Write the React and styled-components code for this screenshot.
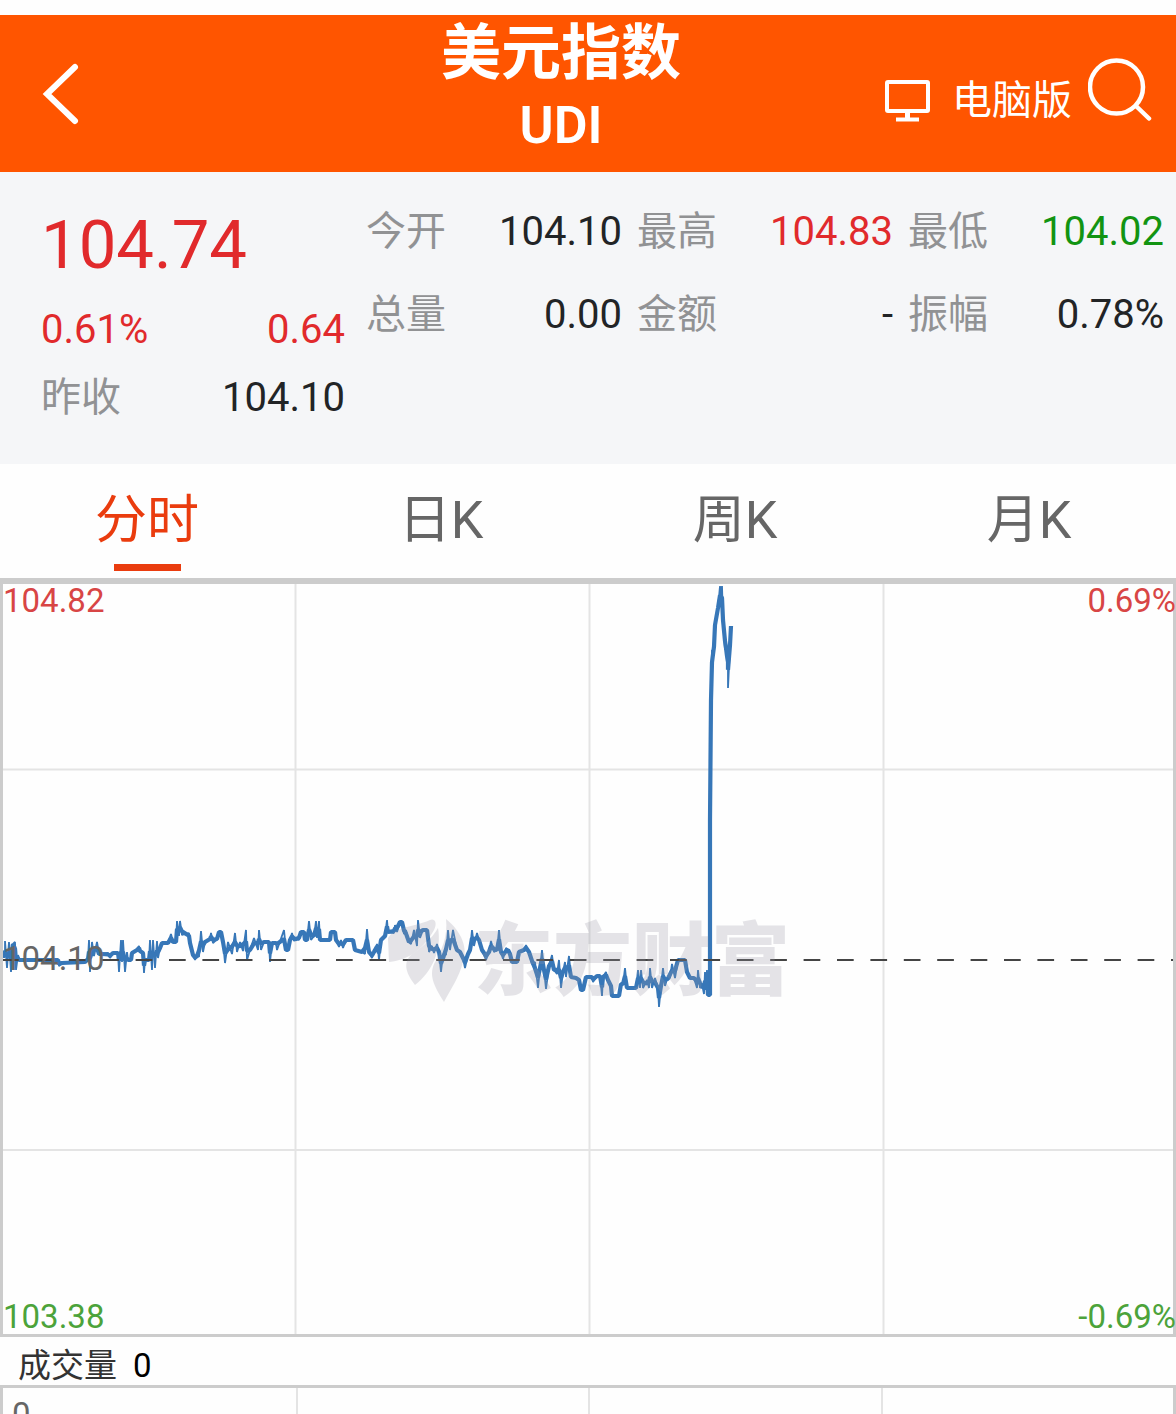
import React, { useState } from "react";
import styled, { createGlobalStyle } from "styled-components";

const GlobalStyle = createGlobalStyle`
  * { box-sizing: border-box; }
  body {
    margin: 0;
    background: #fefefe;
    font-family: Roboto, "Noto Sans CJK SC", sans-serif;
  }
  button {
    margin: 0;
    padding: 0;
    border: 0;
    background: none;
    color: inherit;
    font: inherit;
    cursor: pointer;
  }
  svg { display: block; }
`;

const colors = {
  brand: "#ff5500",
  active: "#ea3c0e",
  up: "#e12a2c",
  down: "#129412",
  plain: "#222426",
  muted: "#919294",
  frame: "#cccccc",
  grid: "#e4e4e4",
  line: "#3777b8",
};

const Page = styled.main`
  display: flex;
  flex-direction: column;
  height: 100vh;
  padding-top: 15px;
  overflow: hidden;
`;

const Header = styled.header`
  display: grid;
  grid-template-columns: 260px 1fr 314px;
  flex: none;
  height: 157px;
  background: ${colors.brand};
  color: #fff;
`;

const BackButton = styled.button`
  display: flex;
  align-items: center;
  justify-self: start;
  padding: 0 40px;
`;

const Heading = styled.div`
  padding-top: 2px;
  text-align: center;
`;

const Title = styled.h1`
  margin: 0;
  font-size: 60px;
  font-weight: 700;
  line-height: 74px;
  white-space: nowrap;
`;

const Code = styled.p`
  margin: 0;
  font-size: 52px;
  font-weight: 600;
  line-height: 70px;
`;

const Tools = styled.div`
  display: flex;
  align-items: center;
  justify-content: flex-end;
  gap: 16px;
  padding-right: 24px;
`;

const DesktopLink = styled.a`
  display: flex;
  align-items: center;
  gap: 22px;
  padding-top: 14px;
  color: inherit;
  font-size: 40px;
  line-height: 48px;
  text-decoration: none;
  white-space: nowrap;
`;

const SearchButton = styled.button`
  padding-bottom: 8px;
`;

const Quote = styled.section`
  display: grid;
  grid-template-columns: 304px 1fr;
  gap: 21px;
  flex: none;
  height: 292px;
  padding: 0 12px 0 41px;
  background: #f5f6f8;
  font-size: 40px;
`;

const Summary = styled.div`
  padding-top: 22px;
`;

const Price = styled.div`
  color: ${colors.up};
  font-size: 67px;
  line-height: 102px;
`;

const SummaryRow = styled.div`
  display: flex;
  justify-content: space-between;
  line-height: 68px;
`;

const Stats = styled.dl`
  display: grid;
  grid-template-columns: repeat(3, 1fr);
  align-content: start;
  column-gap: 15px;
  margin: 0;
  padding-top: 18px;
`;

const Stat = styled.div`
  display: flex;
  justify-content: space-between;
  line-height: 83px;
  white-space: nowrap;
`;

const Label = styled.dt`
  color: ${colors.muted};
`;

const Value = styled.dd`
  margin: 0;
  color: ${({ $tone }) => colors[$tone || "plain"]};
`;

const Tabs = styled.nav`
  display: grid;
  grid-template-columns: repeat(4, 1fr);
  flex: none;
  height: 114px;
`;

const Tab = styled.button`
  display: flex;
  flex-direction: column;
  align-items: center;
  padding-top: 14px;
  color: ${({ $active }) => ($active ? colors.active : "#666")};
  font-size: 52px;
  line-height: 86px;

  &::after {
    content: "";
    width: 67px;
    height: 7px;
    background: ${({ $active }) => ($active ? colors.active : "transparent")};
  }
`;

const ChartPanel = styled.section`
  position: relative;
  flex: none;
  border: 3px solid ${colors.frame};
  border-top-width: 6px;

  > svg {
    width: 100%;
    height: auto;
  }
`;

const AxisLabel = styled.span`
  position: absolute;
  ${({ $right }) => ($right ? "right: -3px;" : "left: 0;")}
  ${({ $at }) =>
    ({
      top: "top: 0;",
      middle: "top: 50%; transform: translateY(-50%);",
      bottom: "bottom: 0;",
    })[$at]}
  color: ${({ $color }) => $color};
  font-size: 33px;
  line-height: 34px;
`;

const VolumeTitle = styled.h2`
  display: flex;
  gap: 16px;
  flex: none;
  height: 48px;
  margin: 0;
  padding-left: 18px;
  color: #333;
  font-size: 33px;
  font-weight: 400;
  line-height: 58px;
`;

const VolumeValue = styled.span`
  color: #000;
`;

const VolumePanel = styled.section`
  display: grid;
  grid-template-columns: repeat(4, 1fr);
  flex: 1;
  min-height: 0;
  border: 3px solid ${colors.frame};
  border-bottom: 0;
`;

const VolumeCell = styled.div`
  padding: 10px 9px;
  border-left: 2px solid ${colors.grid};
  color: #666;
  font-size: 33px;
  line-height: 34px;

  &:first-child {
    border-left: 0;
  }
`;

const STATS = [
  ["今开", "104.10"],
  ["最高", "104.83", "up"],
  ["最低", "104.02", "down"],
  ["总量", "0.00"],
  ["金额", "-"],
  ["振幅", "0.78%"],
];

const TABS = ["分时", "日K", "周K", "月K"];

// Pairs of x and distance below the previous close.
const SERIES = `
0,-4 5,-4 5,-19 7,8 9,-18 11,12 13,-16 15,-18 16,10 18,-5 20,0 58,0 59,6 62,3 85,2 88,-1
89,-20 90,12 92,-18 94,-4 97,-18 99,-6 102,-6 108,-7 110,-2 113,-7 118,-7 119,12 121,-20
122,2 123,-20 125,12 127,-8 128,0 131,0 132,-7 137,-10 139,-14 140,-9 143,-7 144,13 145,0
149,0 150,-20 152,10 153,-20 155,8 157,-19 158,-2 160,-12 162,-17 168,-17 171,-26 173,-18
176,-18 177,-39 179,-24 180,-39 182,-25 189,-27 190,-17 193,-5 195,0 197,-6 199,-3 201,-29
203,-8 205,-18 210,-21 211,-27 213,-17 217,-21 219,-28 221,-28 223,-18 225,3 228,-18 232,-6
235,-27 237,-8 240,-18 243,-9 246,-30 247,0 250,-10 254,-22 258,-10 259,-30 261,-10 264,-18
269,-18 270,2 272,-17 276,-17 277,-10 284,-30 286,-10 288,-10 290,-20 292,-27 294,-19 296,-22
299,-20 301,-28 304,-28 305,-20 307,-20 309,-39 311,-20 314,-24 316,-39 317,-22 319,-39
320,-20 330,-20 331,-28 335,-28 336,-20 339,-13 341,-20 343,-12 346,-20 353,-20 355,-10
362,-8 365,-6 367,-31 369,-8 372,-2 374,-8 375,-10 377,-16 378,-10 379,0 381,-20 385,-24
387,-40 388,-28 394,-27 395,-35 397,-28 400,-38 402,-38 404,-26 406,-30 409,-18 411,-16
414,-30 417,-14 418,-40 420,-22 423,-30 427,-30 429,-8 432,-14 434,-7 437,-16 439,-8 441,12
443,-6 446,-5 448,-30 450,-10 453,-30 457,-10 460,-8 463,-2 465,8 468,-6 470,-10 472,-30
474,-14 477,-27 479,-20 482,-10 486,0 489,-8 491,-19 494,-8 497,-10 499,-30 501,-8 503,-1
506,-12 508,-10 510,-6 512,2 517,2 519,-8 524,-10 526,-15 529,-8 532,4 535,2 538,28 540,8
542,-10 544,10 546,29 549,6 552,-5 554,10 557,14 559,0 561,28 563,12 565,2 566,17 569,-4
571,17 576,18 579,20 581,30 583,30 586,17 592,17 593,22 597,16 600,16 602,36 603,17 606,12
608,20 611,26 612,36 619,36 621,24 623,24 625,8 627,28 636,28 638,10 640,28 641,10 643,28
647,20 649,28 650,8 652,28 655,18 658,28 659,47 661,26 663,8 665,26 668,16 670,18 672,4
675,18 678,0 685,0 687,12 690,18 694,18 697,28 698,10 700,28 702,24 704,34 705,12 706,30
707,10 708,35 710,35 710,-140 711,-260 712,-310 714,-306 715,-335 718,-352 720,-374 721,-355
722,-374 723,-340 725,-310 726,-320 727,-295 728,-310 728,-272 730,-315 731,-334`
  .trim()
  .split(/\s+/)
  .map((pair) => pair.split(",").map(Number));

// The heavy stroke stops short of each spike, so that spikes taper to a thin tip.
const BODY = SERIES.map(([x, y], i) => {
  const before = SERIES[i - 1];
  const after = SERIES[i + 1];
  if (!before || !after || (y - before[1]) * (y - after[1]) <= 0) return [x, y];
  return [x, y * 0.55 + ((before[1] + after[1]) / 2) * 0.45];
});

function BackIcon() {
  return (
    <svg width="40" height="64" viewBox="0 0 40 64" fill="none" stroke="#fff" strokeWidth="6" strokeLinecap="round" aria-hidden="true">
      <path d="M35 5 7 32l28 27" />
    </svg>
  );
}

function MonitorIcon() {
  return (
    <svg width="45" height="42" viewBox="0 0 45 42" fill="none" stroke="#fff" strokeWidth="4" aria-hidden="true">
      <rect x="2" y="2" width="41" height="29" rx="1" />
      <path d="M22.500 31v8" strokeWidth="5" />
      <path d="M11 39.500h23" />
    </svg>
  );
}

function SearchIcon() {
  return (
    <svg width="64" height="64" viewBox="0 0 64 64" fill="none" stroke="#fff" strokeWidth="4.500" strokeLinecap="round" aria-hidden="true">
      <circle cx="28.500" cy="29" r="26.500" />
      <path d="M48 48l13 12.500" />
    </svg>
  );
}

function PriceChart() {
  return (
    <svg viewBox="3 6 1170 750" role="img" aria-label="美元指数分时走势">
      <g stroke={colors.grid} strokeWidth="2">
        <path d="M295.500 6v750M589.500 6v750M883.500 6v750M3 191.500h1170M3 572h1170" />
      </g>
      <g transform="translate(0 382)">
        <g fill="none" stroke={colors.line} strokeLinejoin="bevel">
          <polyline points={BODY.join(" ")} strokeWidth="4.200" />
          <polyline points={SERIES.join(" ")} strokeWidth="1.800" />
        </g>
        <path d="M2 0h1174" stroke="#444" strokeWidth="1.800" strokeDasharray="16.700 16.700" />
      </g>
      <g fill="#9997a6" opacity="0.25">
        <path d="M388 360C396 348 412 350 430 342C434 340 438 344 434 352C424 370 410 382 389 384Z" />
        <path d="M438 350C442 372 432 394 415 407C405 394 403 384 412 376C424 368 432 360 438 350Z" />
        <path d="M446 341C462 354 468 370 463 384C459 400 450 412 444 424C434 408 429 398 434 386C442 372 448 358 446 341Z" />
        <text x="474" y="411" fontSize="79" fontWeight="900" fontFamily='"Noto Sans CJK SC", sans-serif'>
          东方财富
        </text>
      </g>
    </svg>
  );
}

export default function App() {
  const [active, setActive] = useState(TABS[0]);

  return (
    <Page>
      <GlobalStyle />
      <Header>
        <BackButton aria-label="返回">
          <BackIcon />
        </BackButton>
        <Heading>
          <Title>美元指数</Title>
          <Code>UDI</Code>
        </Heading>
        <Tools>
          <DesktopLink href="#desktop">
            <MonitorIcon />
            电脑版
          </DesktopLink>
          <SearchButton aria-label="搜索">
            <SearchIcon />
          </SearchButton>
        </Tools>
      </Header>

      <Quote>
        <Summary>
          <Price>104.74</Price>
          <SummaryRow>
            <Value as="span" $tone="up">0.61%</Value>
            <Value as="span" $tone="up">0.64</Value>
          </SummaryRow>
          <SummaryRow>
            <Label as="span">昨收</Label>
            <Value as="span">104.10</Value>
          </SummaryRow>
        </Summary>
        <Stats>
          {STATS.map(([label, value, tone]) => (
            <Stat key={label}>
              <Label>{label}</Label>
              <Value $tone={tone}>{value}</Value>
            </Stat>
          ))}
        </Stats>
      </Quote>

      <Tabs>
        {TABS.map((name) => (
          <Tab key={name} $active={name === active} aria-pressed={name === active} onClick={() => setActive(name)}>
            {name}
          </Tab>
        ))}
      </Tabs>

      <ChartPanel>
        <PriceChart />
        <AxisLabel $at="top" $color="#d84545">104.82</AxisLabel>
        <AxisLabel $at="top" $right $color="#d84545">0.69%</AxisLabel>
        <AxisLabel $at="middle" $color="#666">104.10</AxisLabel>
        <AxisLabel $at="bottom" $color="#4ca33a">103.38</AxisLabel>
        <AxisLabel $at="bottom" $right $color="#4ca33a">-0.69%</AxisLabel>
      </ChartPanel>

      <VolumeTitle>
        成交量 <VolumeValue>0</VolumeValue>
      </VolumeTitle>
      <VolumePanel>
        <VolumeCell>0</VolumeCell>
        <VolumeCell />
        <VolumeCell />
        <VolumeCell />
      </VolumePanel>
    </Page>
  );
}
